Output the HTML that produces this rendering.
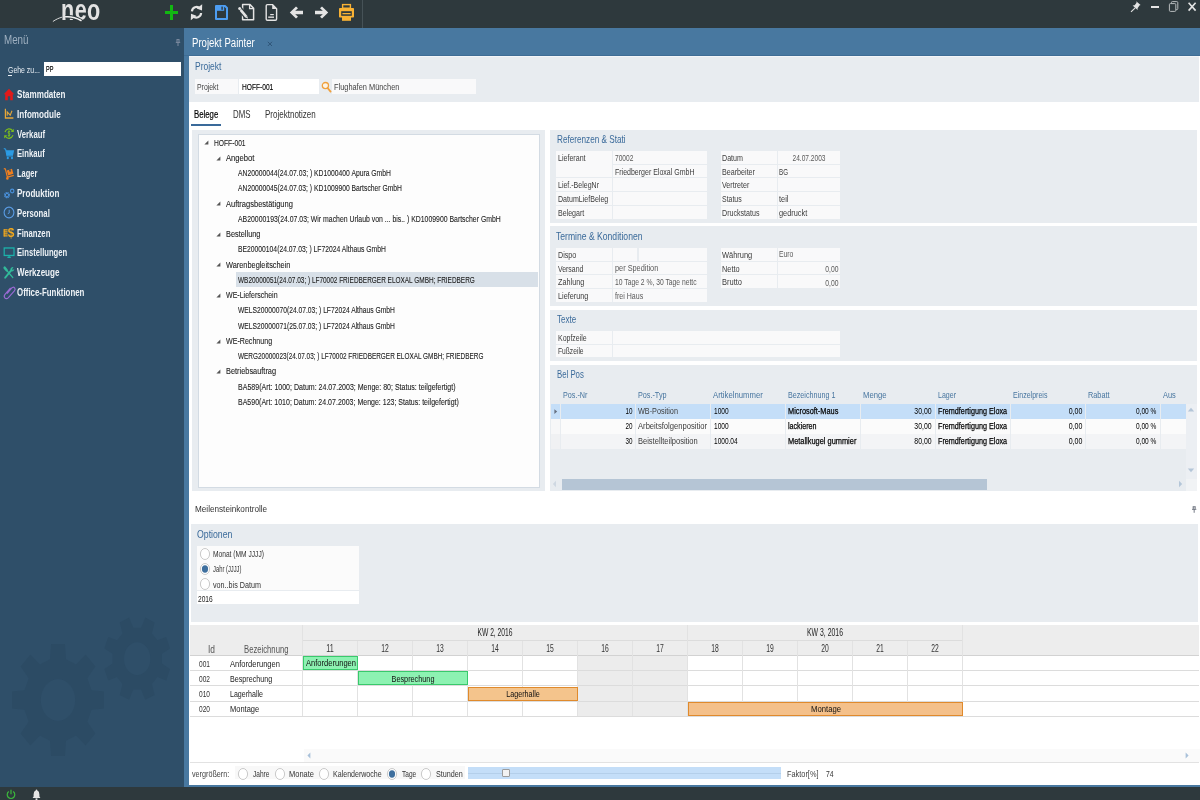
<!DOCTYPE html>
<html lang="de"><head><meta charset="utf-8"><title>neo - Projekt Painter</title>
<style>
html,body{margin:0;padding:0;}
body{width:1200px;height:800px;overflow:hidden;position:relative;background:#fff;font-family:"Liberation Sans",sans-serif;}
.r{position:absolute;}
.t{position:absolute;white-space:nowrap;line-height:1;transform-origin:0 0;}
svg{position:absolute;overflow:visible;}
#wrap{position:absolute;left:0;top:0;width:1200px;height:800px;will-change:transform;}
</style></head><body><div id="wrap">
<div class="r" style="left:0px;top:0px;width:1200px;height:28px;background:#2e393d;"></div>
<div class="r" style="left:0px;top:28px;width:184px;height:759px;background:#2f4f69;"></div>
<div class="r" style="left:184px;top:28px;width:1016px;height:28px;background:#4878a0;"></div>
<div class="r" style="left:184px;top:56px;width:5px;height:731px;background:#4878a0;"></div>
<div class="r" style="left:184px;top:785px;width:1016px;height:2px;background:#4878a0;"></div>
<div class="r" style="left:0px;top:787px;width:1200px;height:13px;background:#2e393d;"></div>
<div class="r" style="left:362px;top:0px;width:1px;height:28px;background:#465257;"></div>
<div class="r" style="left:189px;top:56px;width:1010px;height:46px;background:#e8ecf0;"></div>
<div class="r" style="left:195px;top:79px;width:43px;height:15px;background:#f9f9fa;"></div>
<div class="r" style="left:239px;top:79px;width:80px;height:15px;background:#fff;"></div>
<div class="r" style="left:332px;top:79px;width:144px;height:15px;background:#f9f9fa;"></div>
<div class="r" style="left:191px;top:124px;width:30px;height:2px;background:#3a6a9a;"></div>
<div class="r" style="left:192px;top:130px;width:353px;height:361px;background:#e8ecf0;"></div>
<div class="r" style="left:198px;top:134px;width:342px;height:354px;background:#fdfdfd;box-sizing:border-box;border:1px solid #d3dbe3;"></div>
<div class="r" style="left:235.6px;top:272.3px;width:302.4px;height:14.4px;background:#d8e0e8;"></div>
<div class="r" style="left:550px;top:130px;width:647px;height:92.6px;background:#e8ecf0;"></div>
<div class="r" style="left:550px;top:226.3px;width:647px;height:79.7px;background:#e8ecf0;"></div>
<div class="r" style="left:550px;top:309.6px;width:647px;height:51.5px;background:#e8ecf0;"></div>
<div class="r" style="left:550px;top:365px;width:647px;height:126px;background:#e8ecf0;"></div>
<div class="r" style="left:191px;top:524.2px;width:1007px;height:98px;background:#e8ecf0;"></div>
<span class="t" style="left:60.6px;top:-4.6px;font-size:30px;font-weight:bold;color:#e2e2e2;letter-spacing:0.6px;transform:scaleX(0.72)">neo</span>
<svg style="left:0;top:0" width="120" height="28"><path d="M65.6 16.9 C70 16.4 76 17.6 81.5 20.9" fill="none" stroke="#2e393d" stroke-width="3.4"/><path d="M53.2 21.3 C56 19.3 59 18 61.6 17.3" fill="none" stroke="#e8e8e8" stroke-width="0.9" stroke-linecap="round"/><path d="M65.6 16.8 C70 16.4 76 17.6 81 20.5" fill="none" stroke="#f2f2f2" stroke-width="1.5" stroke-linecap="round"/></svg>
<div class="r" style="left:164.8px;top:10.9px;width:13.3px;height:2.8px;background:#12b812;"></div>
<div class="r" style="left:170.1px;top:4.9px;width:2.8px;height:15.1px;background:#12b812;"></div>
<svg style="left:188px;top:2px" width="17" height="21" viewBox="0 0 17 21"><g fill="none" stroke="#e4e4e4" stroke-width="2.2"><path d="M3.9 9.4 A4.7 4.7 0 0 1 12 6.4"/><path d="M13.1 11 A4.7 4.7 0 0 1 5 14"/></g><path d="M14.2 2.2 L14 8.6 L8.6 6.6 Z" fill="#e4e4e4"/><path d="M2.8 18.2 L3 11.8 L8.4 13.8 Z" fill="#e4e4e4"/></svg>
<svg style="left:215px;top:5px" width="13" height="15" viewBox="0 0 13 15"><path d="M1 1 H10 L12 3 V14 H1 Z" fill="#2e393d" stroke="#4d9df2" stroke-width="2" stroke-linejoin="round"/><rect x="2" y="0.4" width="7.2" height="5.4" fill="#4d9df2"/><rect x="6.4" y="1.6" width="1.4" height="3.2" fill="#2e393d"/></svg>
<svg style="left:238px;top:3px" width="18" height="19" viewBox="0 0 18 19"><path d="M4.6 1.6 H12 L15.6 5.2 V16.8 H4.6 Z" fill="none" stroke="#e4e4e4" stroke-width="1.5" stroke-linejoin="round"/><path d="M11.6 1.6 V5.6 H15.6" fill="none" stroke="#e4e4e4" stroke-width="1.3"/><path d="M1.4 5.2 L9 14.6" stroke="#2e393d" stroke-width="5"/><path d="M2.6 6.8 L8.4 13.8" stroke="#e4e4e4" stroke-width="2.6"/><circle cx="1.7" cy="5.4" r="1.5" fill="#e4e4e4"/><path d="M7.6 14.6 L10 15.8 L9.4 13.2 Z" fill="#e4e4e4"/></svg>
<svg style="left:264px;top:3px" width="15" height="19" viewBox="0 0 15 19"><path d="M3.4 1.6 H8.6 L12.6 5.8 V16 Q12.6 17.2 11.4 17.2 H3.4 Q2.2 17.2 2.2 16 V2.8 Q2.2 1.6 3.4 1.6 Z" fill="none" stroke="#e4e4e4" stroke-width="1.4"/><path d="M8.2 1.6 V6 H12.6 Z" fill="#e4e4e4"/><rect x="6.2" y="11" width="3.6" height="1.2" fill="#e4e4e4"/><rect x="4.2" y="13.4" width="5.8" height="1.6" fill="#c8c8c8"/></svg>
<svg style="left:289px;top:5px" width="15" height="15" viewBox="0 0 15 15"><path d="M0.8 7.4 L7 1.4 L9 3.2 L6.2 5.8 H14 V9.2 H6.2 L9 11.8 L7 13.4 Z" fill="#e4e4e4"/></svg>
<svg style="left:314px;top:5px" width="15" height="15" viewBox="0 0 15 15"><path d="M14.2 7.4 L8 1.4 L6 3.2 L8.8 5.8 H1 V9.2 H8.8 L6 11.8 L8 13.4 Z" fill="#e4e4e4"/></svg>
<svg style="left:338px;top:3px" width="17" height="19" viewBox="0 0 17 19"><rect x="1" y="5" width="15" height="9.6" rx="0.8" fill="#f9b234"/><rect x="4.6" y="1.6" width="7.8" height="3.6" fill="none" stroke="#f9b234" stroke-width="1.4"/><rect x="4" y="14" width="9" height="3.8" fill="#f9b234"/><rect x="3.2" y="8.2" width="10.6" height="4.6" fill="#2e393d"/><rect x="4.4" y="10" width="8.2" height="1.3" fill="#f9b234"/></svg>
<svg style="left:1130px;top:0px" width="12" height="13" viewBox="0 0 12 13"><path d="M6.2 1.2 L10.6 5 L9.4 5.6 L7.6 8.2 L7.6 10 L2.6 5.6 L4.6 5.2 L6.6 2.8 Z" fill="#e4e4e4"/><path d="M5.2 7.8 L1 11.8" stroke="#e4e4e4" stroke-width="1.1"/></svg>
<div class="r" style="left:1150.8px;top:5.9px;width:8.4px;height:2.2px;background:#e4e4e4;"></div>
<svg style="left:1168px;top:0px" width="12" height="13" viewBox="0 0 12 13"><rect x="1.4" y="3.6" width="6.4" height="7.8" rx="1" fill="none" stroke="#b8bcbe" stroke-width="1"/><path d="M3.4 3.4 V2.6 Q3.4 1.6 4.4 1.6 H8.8 Q9.8 1.6 9.8 2.6 V8.6 Q9.8 9.6 8.8 9.6 H8" fill="none" stroke="#b8bcbe" stroke-width="1"/></svg>
<svg style="left:1187px;top:1px" width="10" height="11" viewBox="0 0 10 11"><path d="M1.6 1.8 L8.6 9.6 M8.6 1.8 L1.6 9.6" stroke="#e4e4e4" stroke-width="1.6"/></svg>
<span class="t" style="top:33.57px;font-size:12.79px;color:#9fb0c0;left:3.8px;transform:scaleX(0.766);">Menü</span>
<svg style="left:175px;top:38.6px" width="6" height="8" viewBox="0 0 6 8"><path d="M1.6 0.6 H4.4 M2 0.6 V3 M4 0.6 V3 M0.8 3.4 H5.2 M3 3.4 V7" stroke="#8792a6" stroke-width="0.9" fill="none"/></svg>
<span class="t" style="top:65.28px;font-size:9.59px;color:#e8eef4;left:8px;transform:scaleX(0.723);">Gehe zu...</span>
<div class="r" style="left:8px;top:75.2px;width:3.6px;height:0.9px;background:#e8eef4;"></div>
<div class="r" style="left:44px;top:62px;width:137px;height:14px;background:#fff;"></div>
<span class="t" style="top:65.32px;font-size:9.3px;color:#000;left:46px;transform:scaleX(0.596);-webkit-text-stroke:0.2px #000;">PP</span>
<span class="t" style="top:89.09px;font-size:10.76px;color:#eef2f6;font-weight:bold;left:16.9px;transform:scaleX(0.75);">Stammdaten</span>
<span class="t" style="top:108.89px;font-size:10.76px;color:#eef2f6;font-weight:bold;left:16.9px;transform:scaleX(0.754);">Infomodule</span>
<span class="t" style="top:128.69px;font-size:10.76px;color:#eef2f6;font-weight:bold;left:16.9px;transform:scaleX(0.723);">Verkauf</span>
<span class="t" style="top:148.49px;font-size:10.76px;color:#eef2f6;font-weight:bold;left:16.9px;transform:scaleX(0.713);">Einkauf</span>
<span class="t" style="top:168.29px;font-size:10.76px;color:#eef2f6;font-weight:bold;left:16.9px;transform:scaleX(0.696);">Lager</span>
<span class="t" style="top:188.09px;font-size:10.76px;color:#eef2f6;font-weight:bold;left:16.9px;transform:scaleX(0.748);">Produktion</span>
<span class="t" style="top:207.89px;font-size:10.76px;color:#eef2f6;font-weight:bold;left:16.9px;transform:scaleX(0.722);">Personal</span>
<span class="t" style="top:227.69px;font-size:10.76px;color:#eef2f6;font-weight:bold;left:16.9px;transform:scaleX(0.716);">Finanzen</span>
<span class="t" style="top:247.49px;font-size:10.76px;color:#eef2f6;font-weight:bold;left:16.9px;transform:scaleX(0.713);">Einstellungen</span>
<span class="t" style="top:267.29px;font-size:10.76px;color:#eef2f6;font-weight:bold;left:16.9px;transform:scaleX(0.751);">Werkzeuge</span>
<span class="t" style="top:287.09px;font-size:10.76px;color:#eef2f6;font-weight:bold;left:16.9px;transform:scaleX(0.733);">Office-Funktionen</span>
<svg style="left:3px;top:87.60000000000001px" width="12" height="13.2" viewBox="0 0 12 12" preserveAspectRatio="none"><path d="M6 0.6 L11.2 5.6 H9.8 V11.2 H7.2 V7.6 H4.8 V11.2 H2.2 V5.6 H0.8 Z" fill="#e01a1a"/></svg>
<svg style="left:3px;top:107.4px" width="12" height="13.2" viewBox="0 0 12 12" preserveAspectRatio="none"><path d="M2.4 1.6 V10 H10.4" fill="none" stroke="#e8a838" stroke-width="1.2"/><path d="M4.2 8 V4.4 L7.2 7.4 L9 3.4" fill="none" stroke="#e8a838" stroke-width="1.1"/></svg>
<svg style="left:3px;top:127.20000000000002px" width="12" height="13.2" viewBox="0 0 12 12" preserveAspectRatio="none"><g fill="none" stroke="#7cbc1c" stroke-width="1.2"><path d="M2 4.6 A4.4 4.4 0 0 1 9.6 3.4"/><path d="M10 7.4 A4.4 4.4 0 0 1 2.4 8.6"/></g><path d="M10.8 1.6 V4.6 H7.8 Z M1.2 10.4 V7.4 H4.2 Z" fill="#7cbc1c"/><path d="M7.2 4.4 Q6 3.6 5.2 4.4 Q4.6 5.4 6 6 Q7.6 6.6 6.8 7.6 Q6 8.4 4.8 7.6 M6 3 V9" fill="none" stroke="#7cbc1c" stroke-width="0.9"/></svg>
<svg style="left:3px;top:147.00000000000003px" width="12" height="13.2" viewBox="0 0 12 12" preserveAspectRatio="none"><path d="M0.8 1.4 L2.6 2 L4 8 H10" fill="none" stroke="#2b9be4" stroke-width="1.1"/><path d="M2.8 3 H11.2 L10 7.4 H3.8 Z" fill="#2b9be4"/><circle cx="4.8" cy="10" r="1.1" fill="#2b9be4"/><circle cx="9" cy="10" r="1.1" fill="#2b9be4"/></svg>
<svg style="left:3px;top:166.8px" width="12" height="13.2" viewBox="0 0 12 12" preserveAspectRatio="none"><path d="M0.8 1.4 L2.4 1.8 L4.4 9.2 L10.8 7.6" fill="none" stroke="#f07f1e" stroke-width="1.2"/><path d="M3.8 3.2 L9 1.6 L10.4 6.2 L5.2 7.8 Z" fill="#f07f1e"/><path d="M6 2.4 L6.6 4.4 L8 4 L7.4 2 Z" fill="#2f4f69"/><circle cx="4.4" cy="10.4" r="1.25" fill="#f07f1e"/></svg>
<svg style="left:3px;top:186.6px" width="12" height="13.2" viewBox="0 0 12 12" preserveAspectRatio="none"><circle cx="4" cy="7.4" r="2.2" fill="none" stroke="#4a92dc" stroke-width="1.5" stroke-dasharray="1.2 0.55"/><circle cx="4" cy="7.4" r="1.6" fill="none" stroke="#4a92dc" stroke-width="0.9"/><circle cx="9.2" cy="3.6" r="1.7" fill="none" stroke="#4a92dc" stroke-width="1.1"/></svg>
<svg style="left:3px;top:206.4px" width="12" height="13.2" viewBox="0 0 12 12" preserveAspectRatio="none"><circle cx="6" cy="6" r="4.9" fill="none" stroke="#5a9ce4" stroke-width="1.1"/><path d="M6.2 3.4 V6.4 L4.8 7" fill="none" stroke="#5a9ce4" stroke-width="0.9"/></svg>
<svg style="left:3px;top:226.20000000000002px" width="12" height="13.2" viewBox="0 0 12 12" preserveAspectRatio="none"><path d="M0.8 3.6 H4.6 M0.8 5.4 H4.6 M0.8 7.2 H4.6 M0.8 9 H4.6" stroke="#f2a81c" stroke-width="1.15"/><rect x="0.6" y="3" width="1.1" height="6.6" fill="#f2a81c"/><text x="4.7" y="10.2" font-family="Liberation Sans, sans-serif" font-weight="bold" font-size="11.5" fill="#f2a81c" textLength="6.6" lengthAdjust="spacingAndGlyphs">$</text></svg>
<svg style="left:3px;top:246.00000000000003px" width="12" height="13.2" viewBox="0 0 12 12" preserveAspectRatio="none"><rect x="1.2" y="1.8" width="9.8" height="6.8" fill="none" stroke="#1cb2aa" stroke-width="1.2"/><path d="M4.4 10.4 H7.8 M6.1 8.6 V10.4" stroke="#1cb2aa" stroke-width="1.2"/></svg>
<svg style="left:3px;top:265.8px" width="12" height="13.2" viewBox="0 0 12 12" preserveAspectRatio="none"><path d="M2.2 10.6 L8.2 4" stroke="#32ba9a" stroke-width="1.9" stroke-linecap="round"/><path d="M7.4 3.2 A2.3 2.3 0 0 1 10.6 1.2 L9.2 2.8 L9.8 3.8 L11.2 2.4 A2.3 2.3 0 0 1 8.6 5 Z" fill="#32ba9a"/><path d="M1.6 1.6 L3.6 3.8" stroke="#32ba9a" stroke-width="2.4" stroke-linecap="round"/><path d="M3.6 3.8 L9.8 10.4" stroke="#32ba9a" stroke-width="1.2" stroke-linecap="round"/></svg>
<svg style="left:2.6px;top:284.6px" width="13" height="15" viewBox="0 0 13 15"><path d="M4 8.6 L8.6 3.2 Q10.2 1.4 11.6 2.8 Q12.8 4.2 11.4 5.8 L5.4 12.6 Q3.4 14.6 1.8 12.8 Q0.4 11.2 2.2 9.2 L7.6 3" fill="none" stroke="#9a6ad4" stroke-width="1.15"/></svg>
<svg style="left:0;top:600px" width="184" height="186" viewBox="0 600 184 186"><polygon points="51.1,644.1 64.9,644.1 66.0,659.3 76.0,664.4 85.6,654.6 95.4,666.4 87.3,678.2 91.5,690.2 104.0,691.6 104.0,708.4 91.5,709.8 87.3,721.8 95.4,733.6 85.6,745.4 76.0,735.6 66.0,740.7 64.9,755.9 51.1,755.9 50.0,740.7 40.0,735.6 30.4,745.4 20.6,733.6 28.7,721.8 24.5,709.8 12.0,708.4 12.0,691.6 24.5,690.2 28.7,678.2 20.6,666.4 30.4,654.6 40.0,664.4 50.0,659.3" fill="#2c4b64"/><ellipse cx="58" cy="700" rx="17.2" ry="20.9" fill="#2f4f69"/><polygon points="170.0,668.9 166.2,680.5 157.4,677.1 151.9,684.0 154.6,694.9 145.3,699.8 141.1,689.6 133.3,689.6 129.1,699.8 119.8,694.9 122.5,684.0 117.0,677.1 108.2,680.5 104.4,668.9 112.5,663.6 112.5,653.8 104.4,648.5 108.2,636.9 117.0,640.3 122.5,633.4 119.8,622.5 129.1,617.6 133.3,627.8 141.1,627.8 145.3,617.6 154.6,622.5 151.9,633.4 157.4,640.3 166.2,636.9 170.0,648.5 161.9,653.8 161.9,663.6" fill="#2c4b64"/><ellipse cx="137.2" cy="658.7" rx="13.2" ry="16.5" fill="#2f4f69"/></svg>
<div class="r" style="left:184px;top:55px;width:1016px;height:1px;background:#3f6d95;"></div>
<div class="r" style="left:189px;top:56px;width:1010px;height:1px;background:#f3f5f8;"></div>
<span class="t" style="top:35.85px;font-size:13.52px;color:#fff;left:192px;transform:scaleX(0.708);">Projekt Painter</span>
<svg style="left:267px;top:41px" width="6" height="6" viewBox="0 0 6 6"><path d="M0.8 0.8 L5 5 M5 0.8 L0.8 5" stroke="#2f5578" stroke-width="1"/></svg>
<span class="t" style="top:60.35px;font-size:11.63px;color:#3a6a9a;left:195.3px;transform:scaleX(0.729);">Projekt</span>
<span class="t" style="top:81.9px;font-size:9.45px;color:#444;left:196.5px;transform:scaleX(0.731);">Projekt</span>
<span class="t" style="top:81.9px;font-size:9.45px;color:#000;left:241.5px;transform:scaleX(0.701);-webkit-text-stroke:0.15px #000;">HOFF-001</span>
<span class="t" style="top:81.9px;font-size:9.45px;color:#444;left:333.6px;transform:scaleX(0.784);">Flughafen München</span>
<svg style="left:321px;top:81px" width="11" height="12" viewBox="0 0 11 12"><circle cx="4.4" cy="4.6" r="3.1" fill="#fdf3e4" stroke="#f0a03c" stroke-width="1.3"/><path d="M6.8 7.2 L9.6 10.6" stroke="#f0a03c" stroke-width="1.8" stroke-linecap="round"/></svg>
<span class="t" style="top:108.8px;font-size:11.34px;color:#000;left:193.5px;transform:scaleX(0.688);-webkit-text-stroke:0.2px #000;">Belege</span>
<span class="t" style="top:108.8px;font-size:11.34px;color:#333;left:232.8px;transform:scaleX(0.694);">DMS</span>
<span class="t" style="top:108.8px;font-size:11.34px;color:#333;left:264.5px;transform:scaleX(0.707);">Projektnotizen</span>
<span class="t" style="top:137.65px;font-size:9.74px;color:#1c1c1c;left:213.7px;transform:scaleX(0.687);-webkit-text-stroke:0.1px #1c1c1c;">HOFF-001</span>
<svg style="left:204.1px;top:140.3px" width="5" height="5" viewBox="0 0 5 5"><path d="M4.4 0.4 V4.4 H0.4 Z" fill="#555"/></svg>
<span class="t" style="top:152.9px;font-size:9.74px;color:#1c1c1c;left:225.7px;transform:scaleX(0.785);-webkit-text-stroke:0.1px #1c1c1c;">Angebot</span>
<svg style="left:216.1px;top:155.55px" width="5" height="5" viewBox="0 0 5 5"><path d="M4.4 0.4 V4.4 H0.4 Z" fill="#555"/></svg>
<span class="t" style="top:168.15px;font-size:9.74px;color:#1c1c1c;left:237.5px;transform:scaleX(0.696);-webkit-text-stroke:0.1px #1c1c1c;">AN20000044(24.07.03; ) KD1000400 Apura GmbH</span>
<span class="t" style="top:183.4px;font-size:9.74px;color:#1c1c1c;left:237.5px;transform:scaleX(0.695);-webkit-text-stroke:0.1px #1c1c1c;">AN20000045(24.07.03; ) KD1009900 Bartscher GmbH</span>
<span class="t" style="top:198.65px;font-size:9.74px;color:#1c1c1c;left:225.7px;transform:scaleX(0.772);-webkit-text-stroke:0.1px #1c1c1c;">Auftragsbestätigung</span>
<svg style="left:216.1px;top:201.3px" width="5" height="5" viewBox="0 0 5 5"><path d="M4.4 0.4 V4.4 H0.4 Z" fill="#555"/></svg>
<span class="t" style="top:213.9px;font-size:9.74px;color:#1c1c1c;left:237.5px;transform:scaleX(0.708);-webkit-text-stroke:0.1px #1c1c1c;">AB20000193(24.07.03; Wir machen Urlaub von ... bis.. ) KD1009900 Bartscher GmbH</span>
<span class="t" style="top:229.15px;font-size:9.74px;color:#1c1c1c;left:225.7px;transform:scaleX(0.758);-webkit-text-stroke:0.1px #1c1c1c;">Bestellung</span>
<svg style="left:216.1px;top:231.8px" width="5" height="5" viewBox="0 0 5 5"><path d="M4.4 0.4 V4.4 H0.4 Z" fill="#555"/></svg>
<span class="t" style="top:244.4px;font-size:9.74px;color:#1c1c1c;left:237.5px;transform:scaleX(0.695);-webkit-text-stroke:0.1px #1c1c1c;">BE20000104(24.07.03; ) LF72024 Althaus GmbH</span>
<span class="t" style="top:259.65px;font-size:9.74px;color:#1c1c1c;left:225.7px;transform:scaleX(0.757);-webkit-text-stroke:0.1px #1c1c1c;">Warenbegleitschein</span>
<svg style="left:216.1px;top:262.3px" width="5" height="5" viewBox="0 0 5 5"><path d="M4.4 0.4 V4.4 H0.4 Z" fill="#555"/></svg>
<span class="t" style="top:274.9px;font-size:9.74px;color:#1c1c1c;left:237.5px;transform:scaleX(0.663);-webkit-text-stroke:0.1px #1c1c1c;">WB20000051(24.07.03; ) LF70002 FRIEDBERGER ELOXAL GMBH; FRIEDBERG</span>
<span class="t" style="top:290.15px;font-size:9.74px;color:#1c1c1c;left:225.7px;transform:scaleX(0.722);-webkit-text-stroke:0.1px #1c1c1c;">WE-Lieferschein</span>
<svg style="left:216.1px;top:292.8px" width="5" height="5" viewBox="0 0 5 5"><path d="M4.4 0.4 V4.4 H0.4 Z" fill="#555"/></svg>
<span class="t" style="top:305.4px;font-size:9.74px;color:#1c1c1c;left:237.5px;transform:scaleX(0.69);-webkit-text-stroke:0.1px #1c1c1c;">WELS20000070(24.07.03; ) LF72024 Althaus GmbH</span>
<span class="t" style="top:320.65px;font-size:9.74px;color:#1c1c1c;left:237.5px;transform:scaleX(0.69);-webkit-text-stroke:0.1px #1c1c1c;">WELS20000071(25.07.03; ) LF72024 Althaus GmbH</span>
<span class="t" style="top:335.9px;font-size:9.74px;color:#1c1c1c;left:225.7px;transform:scaleX(0.729);-webkit-text-stroke:0.1px #1c1c1c;">WE-Rechnung</span>
<svg style="left:216.1px;top:338.55px" width="5" height="5" viewBox="0 0 5 5"><path d="M4.4 0.4 V4.4 H0.4 Z" fill="#555"/></svg>
<span class="t" style="top:351.15px;font-size:9.74px;color:#1c1c1c;left:237.5px;transform:scaleX(0.66);-webkit-text-stroke:0.1px #1c1c1c;">WERG20000023(24.07.03; ) LF70002 FRIEDBERGER ELOXAL GMBH; FRIEDBERG</span>
<span class="t" style="top:366.4px;font-size:9.74px;color:#1c1c1c;left:225.7px;transform:scaleX(0.758);-webkit-text-stroke:0.1px #1c1c1c;">Betriebsauftrag</span>
<svg style="left:216.1px;top:369.05px" width="5" height="5" viewBox="0 0 5 5"><path d="M4.4 0.4 V4.4 H0.4 Z" fill="#555"/></svg>
<span class="t" style="top:381.65px;font-size:9.74px;color:#1c1c1c;left:237.5px;transform:scaleX(0.723);-webkit-text-stroke:0.1px #1c1c1c;">BA589(Art: 1000; Datum: 24.07.2003; Menge: 80; Status: teilgefertigt)</span>
<span class="t" style="top:396.9px;font-size:9.74px;color:#1c1c1c;left:237.5px;transform:scaleX(0.721);-webkit-text-stroke:0.1px #1c1c1c;">BA590(Art: 1010; Datum: 24.07.2003; Menge: 123; Status: teilgefertigt)</span>
<span class="t" style="top:133.69px;font-size:10.76px;color:#3a6a9a;left:556.7px;transform:scaleX(0.76);">Referenzen &amp; Stati</span>
<div class="r" style="left:556px;top:151px;width:56px;height:26px;background:#f9f9fa;"></div>
<div class="r" style="left:613px;top:151px;width:94px;height:13px;background:#f9f9fa;"></div>
<div class="r" style="left:613px;top:165px;width:94px;height:12px;background:#f9f9fa;"></div>
<div class="r" style="left:613px;top:178px;width:94px;height:13px;background:#f9f9fa;"></div>
<div class="r" style="left:556px;top:178px;width:56px;height:13px;background:#f9f9fa;"></div>
<div class="r" style="left:613px;top:192px;width:94px;height:13px;background:#f9f9fa;"></div>
<div class="r" style="left:556px;top:192px;width:56px;height:13px;background:#f9f9fa;"></div>
<div class="r" style="left:613px;top:206px;width:94px;height:13px;background:#f9f9fa;"></div>
<div class="r" style="left:556px;top:206px;width:56px;height:13px;background:#f9f9fa;"></div>
<span class="t" style="top:153.67px;font-size:9.01px;color:#3c3c3c;left:557.7px;transform:scaleX(0.787);">Lieferant</span>
<span class="t" style="top:181.27px;font-size:9.01px;color:#3c3c3c;left:557.7px;transform:scaleX(0.78);">Lief.-BelegNr</span>
<span class="t" style="top:195.07px;font-size:9.01px;color:#3c3c3c;left:557.7px;transform:scaleX(0.785);">DatumLiefBeleg</span>
<span class="t" style="top:208.87px;font-size:9.01px;color:#3c3c3c;left:557.7px;transform:scaleX(0.784);">Belegart</span>
<span class="t" style="top:154.29px;font-size:8.87px;color:#5a5a5a;left:614.7px;transform:scaleX(0.746);">70002</span>
<span class="t" style="top:167.87px;font-size:9.01px;color:#3c3c3c;left:614.7px;transform:scaleX(0.779);">Friedberger Eloxal GmbH</span>
<div class="r" style="left:721px;top:151px;width:56px;height:13px;background:#f9f9fa;"></div>
<div class="r" style="left:778px;top:151px;width:62px;height:13px;background:#f9f9fa;"></div>
<span class="t" style="top:154.07px;font-size:9.01px;color:#3c3c3c;left:722px;transform:scaleX(0.791);">Datum</span>
<div class="r" style="left:721px;top:165px;width:56px;height:12px;background:#f9f9fa;"></div>
<div class="r" style="left:778px;top:165px;width:62px;height:12px;background:#f9f9fa;"></div>
<span class="t" style="top:167.74px;font-size:9.01px;color:#3c3c3c;left:722px;transform:scaleX(0.794);">Bearbeiter</span>
<div class="r" style="left:721px;top:178px;width:56px;height:13px;background:#f9f9fa;"></div>
<div class="r" style="left:778px;top:178px;width:62px;height:13px;background:#f9f9fa;"></div>
<span class="t" style="top:181.41px;font-size:9.01px;color:#3c3c3c;left:722px;transform:scaleX(0.79);">Vertreter</span>
<div class="r" style="left:721px;top:192px;width:56px;height:13px;background:#f9f9fa;"></div>
<div class="r" style="left:778px;top:192px;width:62px;height:13px;background:#f9f9fa;"></div>
<span class="t" style="top:195.08px;font-size:9.01px;color:#3c3c3c;left:722px;transform:scaleX(0.771);">Status</span>
<div class="r" style="left:721px;top:206px;width:56px;height:13px;background:#f9f9fa;"></div>
<div class="r" style="left:778px;top:206px;width:62px;height:13px;background:#f9f9fa;"></div>
<span class="t" style="top:208.75px;font-size:9.01px;color:#3c3c3c;left:722px;transform:scaleX(0.79);">Druckstatus</span>
<span class="t" style="top:154.29px;font-size:8.87px;color:#5a5a5a;left:808.5px;transform-origin:0 0;transform:scaleX(0.743) translateX(-50%);">24.07.2003</span>
<span class="t" style="top:167.77px;font-size:9.01px;color:#3c3c3c;left:779px;transform:scaleX(0.691);">BG</span>
<span class="t" style="top:195.23px;font-size:9.3px;color:#3c3c3c;left:779px;transform:scaleX(0.791);">teil</span>
<span class="t" style="top:208.9px;font-size:9.3px;color:#3c3c3c;left:779px;transform:scaleX(0.793);">gedruckt</span>
<span class="t" style="top:231.54px;font-size:10.47px;color:#3a6a9a;left:556.4px;transform:scaleX(0.821);">Termine &amp; Konditionen</span>
<div class="r" style="left:556px;top:248px;width:56px;height:13px;background:#f9f9fa;"></div>
<div class="r" style="left:613px;top:248px;width:24px;height:13px;background:#f9f9fa;"></div>
<div class="r" style="left:639px;top:248px;width:68px;height:13px;background:#f9f9fa;"></div>
<span class="t" style="top:250.87px;font-size:9.01px;color:#3c3c3c;left:557.7px;transform:scaleX(0.794);">Dispo</span>
<div class="r" style="left:556px;top:262px;width:56px;height:12px;background:#f9f9fa;"></div>
<div class="r" style="left:613px;top:262px;width:94px;height:12px;background:#f9f9fa;"></div>
<span class="t" style="top:264.67px;font-size:9.01px;color:#3c3c3c;left:557.7px;transform:scaleX(0.768);">Versand</span>
<div class="r" style="left:556px;top:275px;width:56px;height:13px;background:#f9f9fa;"></div>
<div class="r" style="left:613px;top:275px;width:94px;height:13px;background:#f9f9fa;"></div>
<span class="t" style="top:278.47px;font-size:9.01px;color:#3c3c3c;left:557.7px;transform:scaleX(0.808);">Zahlung</span>
<div class="r" style="left:556px;top:289px;width:56px;height:13px;background:#f9f9fa;"></div>
<div class="r" style="left:613px;top:289px;width:94px;height:13px;background:#f9f9fa;"></div>
<span class="t" style="top:292.27px;font-size:9.01px;color:#3c3c3c;left:557.7px;transform:scaleX(0.806);">Lieferung</span>
<span class="t" style="top:264.27px;font-size:9.01px;color:#5a5a5a;left:614.7px;transform:scaleX(0.815);">per Spedition</span>
<span class="t" style="top:277.94px;font-size:9.01px;color:#5a5a5a;left:614.7px;transform:scaleX(0.75);">10 Tage 2 %, 30 Tage nettc</span>
<span class="t" style="top:291.87px;font-size:9.01px;color:#5a5a5a;left:614.7px;transform:scaleX(0.782);">frei Haus</span>
<div class="r" style="left:721px;top:248px;width:56px;height:13px;background:#f9f9fa;"></div>
<div class="r" style="left:778px;top:248px;width:62px;height:13px;background:#f9f9fa;"></div>
<span class="t" style="top:250.97px;font-size:9.01px;color:#3c3c3c;left:722px;transform:scaleX(0.829);">Währung</span>
<div class="r" style="left:721px;top:262px;width:56px;height:12px;background:#f9f9fa;"></div>
<div class="r" style="left:778px;top:262px;width:62px;height:12px;background:#f9f9fa;"></div>
<span class="t" style="top:264.64px;font-size:9.01px;color:#3c3c3c;left:722px;transform:scaleX(0.817);">Netto</span>
<div class="r" style="left:721px;top:275px;width:56px;height:13px;background:#f9f9fa;"></div>
<div class="r" style="left:778px;top:275px;width:62px;height:13px;background:#f9f9fa;"></div>
<span class="t" style="top:278.31px;font-size:9.01px;color:#3c3c3c;left:722px;transform:scaleX(0.832);">Brutto</span>
<span class="t" style="top:250.39px;font-size:8.87px;color:#5a5a5a;left:779px;transform:scaleX(0.763);">Euro</span>
<span class="t" style="top:264.97px;font-size:9.01px;color:#5a5a5a;right:361px;transform-origin:100% 0;transform:scaleX(0.753);">0,00</span>
<span class="t" style="top:278.64px;font-size:9.01px;color:#5a5a5a;right:361px;transform-origin:100% 0;transform:scaleX(0.753);">0,00</span>
<span class="t" style="top:314.61px;font-size:10.03px;color:#3a6a9a;left:556.7px;transform:scaleX(0.805);">Texte</span>
<div class="r" style="left:556px;top:331px;width:56px;height:13px;background:#f9f9fa;"></div>
<div class="r" style="left:613px;top:331px;width:227px;height:13px;background:#f9f9fa;"></div>
<span class="t" style="top:333.99px;font-size:8.87px;color:#3c3c3c;left:557.7px;transform:scaleX(0.787);">Kopfzeile</span>
<div class="r" style="left:556px;top:345px;width:56px;height:12px;background:#f9f9fa;"></div>
<div class="r" style="left:613px;top:345px;width:227px;height:12px;background:#f9f9fa;"></div>
<span class="t" style="top:347.29px;font-size:8.87px;color:#3c3c3c;left:557.7px;transform:scaleX(0.753);">Fußzeile</span>
<span class="t" style="top:370.41px;font-size:10.03px;color:#3a6a9a;left:556.7px;transform:scaleX(0.778);">Bel Pos</span>
<span class="t" style="top:391.44px;font-size:9.16px;color:#47759f;left:563.2px;transform:scaleX(0.786);">Pos.-Nr</span>
<span class="t" style="top:391.44px;font-size:9.16px;color:#47759f;left:638.2px;transform:scaleX(0.789);">Pos.-Typ</span>
<span class="t" style="top:391.44px;font-size:9.16px;color:#47759f;left:713.2px;transform:scaleX(0.843);">Artikelnummer</span>
<span class="t" style="top:391.44px;font-size:9.16px;color:#47759f;left:788.2px;transform:scaleX(0.782);">Bezeichnung 1</span>
<span class="t" style="top:391.44px;font-size:9.16px;color:#47759f;left:863.2px;transform:scaleX(0.839);">Menge</span>
<span class="t" style="top:391.44px;font-size:9.16px;color:#47759f;left:938.2px;transform:scaleX(0.768);">Lager</span>
<span class="t" style="top:391.44px;font-size:9.16px;color:#47759f;left:1013.2px;transform:scaleX(0.768);">Einzelpreis</span>
<span class="t" style="top:391.44px;font-size:9.16px;color:#47759f;left:1088.2px;transform:scaleX(0.8);">Rabatt</span>
<span class="t" style="top:391.44px;font-size:9.16px;color:#47759f;left:1163.2px;transform:scaleX(0.811);">Aus</span>
<div class="r" style="left:550.5px;top:404px;width:9.5px;height:14.5px;background:#c4def8;"></div>
<div class="r" style="left:561px;top:404px;width:74px;height:14.5px;background:#c4def8;"></div>
<div class="r" style="left:636px;top:404px;width:74px;height:14.5px;background:#c4def8;"></div>
<div class="r" style="left:711px;top:404px;width:74px;height:14.5px;background:#c4def8;"></div>
<div class="r" style="left:786px;top:404px;width:74px;height:14.5px;background:#c4def8;"></div>
<div class="r" style="left:861px;top:404px;width:74px;height:14.5px;background:#c4def8;"></div>
<div class="r" style="left:936px;top:404px;width:74px;height:14.5px;background:#c4def8;"></div>
<div class="r" style="left:1011px;top:404px;width:74px;height:14.5px;background:#c4def8;"></div>
<div class="r" style="left:1086px;top:404px;width:74px;height:14.5px;background:#c4def8;"></div>
<div class="r" style="left:1161px;top:404px;width:25px;height:14.5px;background:#c4def8;"></div>
<div class="r" style="left:550.5px;top:419px;width:9.5px;height:14.5px;background:#f7f7f8;"></div>
<div class="r" style="left:561px;top:419px;width:74px;height:14.5px;background:#fbfbfb;"></div>
<div class="r" style="left:636px;top:419px;width:74px;height:14.5px;background:#fbfbfb;"></div>
<div class="r" style="left:711px;top:419px;width:74px;height:14.5px;background:#fbfbfb;"></div>
<div class="r" style="left:786px;top:419px;width:74px;height:14.5px;background:#fbfbfb;"></div>
<div class="r" style="left:861px;top:419px;width:74px;height:14.5px;background:#fbfbfb;"></div>
<div class="r" style="left:936px;top:419px;width:74px;height:14.5px;background:#fbfbfb;"></div>
<div class="r" style="left:1011px;top:419px;width:74px;height:14.5px;background:#fbfbfb;"></div>
<div class="r" style="left:1086px;top:419px;width:74px;height:14.5px;background:#fbfbfb;"></div>
<div class="r" style="left:1161px;top:419px;width:25px;height:14.5px;background:#fbfbfb;"></div>
<div class="r" style="left:550.5px;top:434px;width:9.5px;height:14.5px;background:#f0f1f3;"></div>
<div class="r" style="left:561px;top:434px;width:74px;height:14.5px;background:#f3f4f6;"></div>
<div class="r" style="left:636px;top:434px;width:74px;height:14.5px;background:#f3f4f6;"></div>
<div class="r" style="left:711px;top:434px;width:74px;height:14.5px;background:#f3f4f6;"></div>
<div class="r" style="left:786px;top:434px;width:74px;height:14.5px;background:#f3f4f6;"></div>
<div class="r" style="left:861px;top:434px;width:74px;height:14.5px;background:#f3f4f6;"></div>
<div class="r" style="left:936px;top:434px;width:74px;height:14.5px;background:#f3f4f6;"></div>
<div class="r" style="left:1011px;top:434px;width:74px;height:14.5px;background:#f3f4f6;"></div>
<div class="r" style="left:1086px;top:434px;width:74px;height:14.5px;background:#f3f4f6;"></div>
<div class="r" style="left:1161px;top:434px;width:25px;height:14.5px;background:#f3f4f6;"></div>
<svg style="left:554px;top:409px" width="4" height="6" viewBox="0 0 4 6"><path d="M0.4 0.3 L3.2 2.6 L0.4 4.9 Z" fill="#667080"/></svg>
<span class="t" style="top:406.1px;font-size:9.45px;color:#000;right:568px;transform-origin:100% 0;transform:scaleX(0.666);">10</span>
<span class="t" style="top:406.1px;font-size:9.45px;color:#3c3c3c;left:638.2px;transform:scaleX(0.769);">WB-Position</span>
<span class="t" style="top:406.1px;font-size:9.45px;color:#000;left:713.6px;transform:scaleX(0.694);">1000</span>
<span class="t" style="top:406.1px;font-size:9.45px;color:#000;left:788px;transform:scaleX(0.78);-webkit-text-stroke:0.25px #000;">Microsoft-Maus</span>
<span class="t" style="top:406.1px;font-size:9.45px;color:#000;right:268px;transform-origin:100% 0;transform:scaleX(0.732);">30,00</span>
<span class="t" style="top:406.1px;font-size:9.45px;color:#000;left:938.4px;transform:scaleX(0.765);-webkit-text-stroke:0.25px #000;">Fremdfertigung Eloxa</span>
<span class="t" style="top:406.1px;font-size:9.45px;color:#000;right:117.6px;transform-origin:100% 0;transform:scaleX(0.745);">0,00</span>
<span class="t" style="top:406.1px;font-size:9.45px;color:#000;right:43.2px;transform-origin:100% 0;transform:scaleX(0.693);">0,00 %</span>
<span class="t" style="top:421.1px;font-size:9.45px;color:#000;right:568px;transform-origin:100% 0;transform:scaleX(0.666);">20</span>
<span class="t" style="top:421.1px;font-size:9.45px;color:#3c3c3c;left:638.2px;transform:scaleX(0.808);">Arbeitsfolgenpositior</span>
<span class="t" style="top:421.1px;font-size:9.45px;color:#000;left:713.6px;transform:scaleX(0.694);">1000</span>
<span class="t" style="top:421.1px;font-size:9.45px;color:#000;left:788px;transform:scaleX(0.754);-webkit-text-stroke:0.25px #000;">lackieren</span>
<span class="t" style="top:421.1px;font-size:9.45px;color:#000;right:268px;transform-origin:100% 0;transform:scaleX(0.732);">30,00</span>
<span class="t" style="top:421.1px;font-size:9.45px;color:#000;left:938.4px;transform:scaleX(0.765);-webkit-text-stroke:0.25px #000;">Fremdfertigung Eloxa</span>
<span class="t" style="top:421.1px;font-size:9.45px;color:#000;right:117.6px;transform-origin:100% 0;transform:scaleX(0.745);">0,00</span>
<span class="t" style="top:421.1px;font-size:9.45px;color:#000;right:43.2px;transform-origin:100% 0;transform:scaleX(0.693);">0,00 %</span>
<span class="t" style="top:436.1px;font-size:9.45px;color:#000;right:568px;transform-origin:100% 0;transform:scaleX(0.666);">30</span>
<span class="t" style="top:436.1px;font-size:9.45px;color:#3c3c3c;left:638.2px;transform:scaleX(0.796);">Beistellteilposition</span>
<span class="t" style="top:436.1px;font-size:9.45px;color:#000;left:713.6px;transform:scaleX(0.691);">1000.04</span>
<span class="t" style="top:436.1px;font-size:9.45px;color:#000;left:788px;transform:scaleX(0.785);-webkit-text-stroke:0.25px #000;">Metallkugel gummier</span>
<span class="t" style="top:436.1px;font-size:9.45px;color:#000;right:268px;transform-origin:100% 0;transform:scaleX(0.732);">80,00</span>
<span class="t" style="top:436.1px;font-size:9.45px;color:#000;left:938.4px;transform:scaleX(0.765);-webkit-text-stroke:0.25px #000;">Fremdfertigung Eloxa</span>
<span class="t" style="top:436.1px;font-size:9.45px;color:#000;right:117.6px;transform-origin:100% 0;transform:scaleX(0.745);">0,00</span>
<span class="t" style="top:436.1px;font-size:9.45px;color:#000;right:43.2px;transform-origin:100% 0;transform:scaleX(0.693);">0,00 %</span>
<div class="r" style="left:1186px;top:404px;width:11px;height:87px;background:#eceff3;"></div>
<div class="r" style="left:1186px;top:478.5px;width:11px;height:12.5px;background:#f1f3f5;"></div>
<div class="r" style="left:562px;top:478.5px;width:425px;height:11.5px;background:#b5c5d5;"></div>
<svg style="left:552px;top:480px" width="5" height="8" viewBox="0 0 5 8"><path d="M4 0.8 L0.8 4 L4 7.2 Z" fill="#cfd8e2"/></svg>
<svg style="left:1178px;top:480px" width="5" height="8" viewBox="0 0 5 8"><path d="M1 0.8 L4.2 4 L1 7.2 Z" fill="#b4c6d8"/></svg>
<svg style="left:1187px;top:407px" width="8" height="5" viewBox="0 0 8 5"><path d="M0.8 4.4 L4 0.8 L7.2 4.4 Z" fill="#b4c6d8"/></svg>
<svg style="left:1187px;top:468px" width="8" height="5" viewBox="0 0 8 5"><path d="M0.8 0.6 L4 4.2 L7.2 0.6 Z" fill="#b4c6d8"/></svg>
<span class="t" style="top:504.18px;font-size:9.59px;color:#333;left:194.8px;transform:scaleX(0.852);">Meilensteinkontrolle</span>
<svg style="left:1190.6px;top:506.4px" width="6" height="7.4" viewBox="0 0 7 8"><path d="M2 0.6 H5.4 M2.6 0.6 V3.2 M4.8 0.6 V3.2 M1.2 3.6 H6.2 M3.7 3.6 V7.6" stroke="#4a5260" stroke-width="0.9" fill="none"/></svg>
<span class="t" style="top:529.51px;font-size:10.03px;color:#3a6a9a;left:196.8px;transform:scaleX(0.872);">Optionen</span>
<div class="r" style="left:196.8px;top:545.7px;width:162.2px;height:44.6px;background:#fbfbfb;"></div>
<div class="r" style="left:196.8px;top:591px;width:162.2px;height:13px;background:#fff;"></div>
<svg style="left:198.7px;top:546.5px" width="12" height="14" viewBox="0 0 12 14"><ellipse cx="6" cy="7" rx="4.6" ry="5.5" fill="#fff" stroke="#c4c4c4" stroke-width="0.9"/></svg>
<svg style="left:198.7px;top:561.8px" width="12" height="14" viewBox="0 0 12 14"><ellipse cx="6" cy="7" rx="4.6" ry="5.5" fill="#fff" stroke="#c4c4c4" stroke-width="0.9"/><ellipse cx="6" cy="7" rx="3.1" ry="3.7" fill="#3e6f9e"/></svg>
<svg style="left:198.7px;top:576.8px" width="12" height="14" viewBox="0 0 12 14"><ellipse cx="6" cy="7" rx="4.6" ry="5.5" fill="#fff" stroke="#c4c4c4" stroke-width="0.9"/></svg>
<span class="t" style="top:549.1px;font-size:9.45px;color:#333;left:213.3px;transform:scaleX(0.704);">Monat (MM JJJJ)</span>
<span class="t" style="top:564.4px;font-size:9.45px;color:#333;left:213.3px;transform:scaleX(0.617);">Jahr (JJJJ)</span>
<span class="t" style="top:579.8px;font-size:9.45px;color:#333;left:213.3px;transform:scaleX(0.762);">von..bis Datum</span>
<span class="t" style="top:594.81px;font-size:8.72px;color:#222;left:198.3px;transform:scaleX(0.758);">2016</span>
<div class="r" style="left:190px;top:624.5px;width:1009px;height:31px;background:#ededed;"></div>
<div class="r" style="left:577.5px;top:655px;width:110px;height:61.5px;background:#ececec;"></div>
<div class="r" style="left:302.5px;top:639.7px;width:660px;height:1px;background:#dcdcdc;"></div>
<div class="r" style="left:190px;top:654.8px;width:1009px;height:1px;background:#d2d2d2;"></div>
<div class="r" style="left:190px;top:670px;width:1009px;height:1px;background:#dcdcdc;"></div>
<div class="r" style="left:190px;top:685.2px;width:1009px;height:1px;background:#dcdcdc;"></div>
<div class="r" style="left:190px;top:700.75px;width:1009px;height:1px;background:#dcdcdc;"></div>
<div class="r" style="left:190px;top:715.9px;width:1009px;height:1px;background:#dcdcdc;"></div>
<div class="r" style="left:302px;top:624.5px;width:1px;height:91.5px;background:#e2e2e2;"></div>
<div class="r" style="left:357px;top:641px;width:1px;height:75px;background:#e2e2e2;"></div>
<div class="r" style="left:412px;top:641px;width:1px;height:75px;background:#e2e2e2;"></div>
<div class="r" style="left:467px;top:641px;width:1px;height:75px;background:#e2e2e2;"></div>
<div class="r" style="left:522px;top:641px;width:1px;height:75px;background:#e2e2e2;"></div>
<div class="r" style="left:577px;top:641px;width:1px;height:75px;background:#e2e2e2;"></div>
<div class="r" style="left:632px;top:641px;width:1px;height:75px;background:#e2e2e2;"></div>
<div class="r" style="left:687px;top:624.5px;width:1px;height:91.5px;background:#e2e2e2;"></div>
<div class="r" style="left:742px;top:641px;width:1px;height:75px;background:#e2e2e2;"></div>
<div class="r" style="left:797px;top:641px;width:1px;height:75px;background:#e2e2e2;"></div>
<div class="r" style="left:852px;top:641px;width:1px;height:75px;background:#e2e2e2;"></div>
<div class="r" style="left:907px;top:641px;width:1px;height:75px;background:#e2e2e2;"></div>
<div class="r" style="left:962px;top:624.5px;width:1px;height:91.5px;background:#e2e2e2;"></div>
<span class="t" style="top:627.88px;font-size:10.17px;color:#222;left:495.3px;transform-origin:0 0;transform:scaleX(0.661) translateX(-50%);">KW 2, 2016</span>
<span class="t" style="top:627.88px;font-size:10.17px;color:#222;left:825.3px;transform-origin:0 0;transform:scaleX(0.677) translateX(-50%);">KW 3, 2016</span>
<span class="t" style="top:643.98px;font-size:10.17px;color:#333;left:330.2px;transform-origin:0 0;transform:scaleX(0.71) translateX(-50%);">11</span>
<span class="t" style="top:643.98px;font-size:10.17px;color:#333;left:385.2px;transform-origin:0 0;transform:scaleX(0.663) translateX(-50%);">12</span>
<span class="t" style="top:643.98px;font-size:10.17px;color:#333;left:440.2px;transform-origin:0 0;transform:scaleX(0.663) translateX(-50%);">13</span>
<span class="t" style="top:643.98px;font-size:10.17px;color:#333;left:495.2px;transform-origin:0 0;transform:scaleX(0.663) translateX(-50%);">14</span>
<span class="t" style="top:643.98px;font-size:10.17px;color:#333;left:550.2px;transform-origin:0 0;transform:scaleX(0.663) translateX(-50%);">15</span>
<span class="t" style="top:643.98px;font-size:10.17px;color:#333;left:605.2px;transform-origin:0 0;transform:scaleX(0.663) translateX(-50%);">16</span>
<span class="t" style="top:643.98px;font-size:10.17px;color:#333;left:660.2px;transform-origin:0 0;transform:scaleX(0.663) translateX(-50%);">17</span>
<span class="t" style="top:643.98px;font-size:10.17px;color:#333;left:715.2px;transform-origin:0 0;transform:scaleX(0.663) translateX(-50%);">18</span>
<span class="t" style="top:643.98px;font-size:10.17px;color:#333;left:770.2px;transform-origin:0 0;transform:scaleX(0.663) translateX(-50%);">19</span>
<span class="t" style="top:643.98px;font-size:10.17px;color:#333;left:825.2px;transform-origin:0 0;transform:scaleX(0.663) translateX(-50%);">20</span>
<span class="t" style="top:643.98px;font-size:10.17px;color:#333;left:880.2px;transform-origin:0 0;transform:scaleX(0.663) translateX(-50%);">21</span>
<span class="t" style="top:643.98px;font-size:10.17px;color:#333;left:935.2px;transform-origin:0 0;transform:scaleX(0.663) translateX(-50%);">22</span>
<span class="t" style="top:644.54px;font-size:10.47px;color:#555;left:208.3px;transform:scaleX(0.802);">Id</span>
<span class="t" style="top:644.54px;font-size:10.47px;color:#555;left:243.5px;transform:scaleX(0.735);">Bezeichnung</span>
<span class="t" style="top:659.08px;font-size:9.59px;color:#333;left:198.8px;transform:scaleX(0.687);">001</span>
<span class="t" style="top:659.08px;font-size:9.59px;color:#222;left:230px;transform:scaleX(0.788);">Anforderungen</span>
<span class="t" style="top:674.28px;font-size:9.59px;color:#333;left:198.8px;transform:scaleX(0.687);">002</span>
<span class="t" style="top:674.28px;font-size:9.59px;color:#222;left:230px;transform:scaleX(0.748);">Besprechung</span>
<span class="t" style="top:688.98px;font-size:9.59px;color:#333;left:198.8px;transform:scaleX(0.687);">010</span>
<span class="t" style="top:688.98px;font-size:9.59px;color:#222;left:230px;transform:scaleX(0.737);">Lagerhalle</span>
<span class="t" style="top:704.18px;font-size:9.59px;color:#333;left:198.8px;transform:scaleX(0.687);">020</span>
<span class="t" style="top:704.18px;font-size:9.59px;color:#222;left:230px;transform:scaleX(0.782);">Montage</span>
<div class="r" style="left:303px;top:656px;width:55px;height:14.399999999999977px;background:#8df2b2;box-sizing:border-box;border:1px solid #39c96c;"></div>
<span class="t" style="top:658.45px;font-size:9.74px;color:#111;left:331px;transform-origin:0 0;transform:scaleX(0.776) translateX(-50%);">Anforderungen</span>
<div class="r" style="left:358px;top:671.4px;width:110px;height:14.100000000000023px;background:#8df2b2;box-sizing:border-box;border:1px solid #39c96c;"></div>
<span class="t" style="top:673.7px;font-size:9.74px;color:#111;left:413.2px;transform-origin:0 0;transform:scaleX(0.749) translateX(-50%);">Besprechung</span>
<div class="r" style="left:468px;top:686.5px;width:110px;height:14.299999999999955px;background:#f4c48c;box-sizing:border-box;border:1px solid #e08a2c;"></div>
<span class="t" style="top:688.9px;font-size:9.74px;color:#111;left:523.3px;transform-origin:0 0;transform:scaleX(0.739) translateX(-50%);">Lagerhalle</span>
<div class="r" style="left:688px;top:702px;width:275px;height:14.200000000000045px;background:#f4c08a;box-sizing:border-box;border:1px solid #e08a2c;"></div>
<span class="t" style="top:704.35px;font-size:9.74px;color:#111;left:825.5px;transform-origin:0 0;transform:scaleX(0.791) translateX(-50%);">Montage</span>
<div class="r" style="left:303.5px;top:749px;width:896px;height:13px;background:#fafafa;"></div>
<div class="r" style="left:190px;top:762px;width:1009px;height:1px;background:#e2e2e2;"></div>
<svg style="left:307px;top:752px" width="4" height="7" viewBox="0 0 4 7"><path d="M3.4 0.4 L0.4 3.4 L3.4 6.4 Z" fill="#a9c1da"/></svg>
<svg style="left:1185px;top:752px" width="4" height="7" viewBox="0 0 4 7"><path d="M0.6 0.4 L3.6 3.4 L0.6 6.4 Z" fill="#a9c1da"/></svg>
<span class="t" style="top:769.94px;font-size:9.16px;color:#444;left:192.2px;transform:scaleX(0.786);">vergrößern:</span>
<div class="r" style="left:234.7px;top:766.3px;width:230.5px;height:12.7px;background:#f8f8f8;"></div>
<svg style="left:237.2px;top:766.7px" width="12" height="14" viewBox="0 0 12 14"><ellipse cx="6" cy="7" rx="4.6" ry="5.5" fill="#fff" stroke="#c4c4c4" stroke-width="0.9"/></svg>
<svg style="left:273.5px;top:766.7px" width="12" height="14" viewBox="0 0 12 14"><ellipse cx="6" cy="7" rx="4.6" ry="5.5" fill="#fff" stroke="#c4c4c4" stroke-width="0.9"/></svg>
<svg style="left:318px;top:766.7px" width="12" height="14" viewBox="0 0 12 14"><ellipse cx="6" cy="7" rx="4.6" ry="5.5" fill="#fff" stroke="#c4c4c4" stroke-width="0.9"/></svg>
<svg style="left:386.3px;top:766.7px" width="12" height="14" viewBox="0 0 12 14"><ellipse cx="6" cy="7" rx="4.6" ry="5.5" fill="#fff" stroke="#c4c4c4" stroke-width="0.9"/><ellipse cx="6" cy="7" rx="3.1" ry="3.7" fill="#3e6f9e"/></svg>
<svg style="left:420.3px;top:766.7px" width="12" height="14" viewBox="0 0 12 14"><ellipse cx="6" cy="7" rx="4.6" ry="5.5" fill="#fff" stroke="#c4c4c4" stroke-width="0.9"/></svg>
<span class="t" style="top:769.84px;font-size:9.16px;color:#333;left:252.6px;transform:scaleX(0.716);">Jahre</span>
<span class="t" style="top:769.84px;font-size:9.16px;color:#333;left:288.6px;transform:scaleX(0.818);">Monate</span>
<span class="t" style="top:769.84px;font-size:9.16px;color:#333;left:333.3px;transform:scaleX(0.771);">Kalenderwoche</span>
<span class="t" style="top:769.84px;font-size:9.16px;color:#333;left:402px;transform:scaleX(0.715);">Tage</span>
<span class="t" style="top:769.84px;font-size:9.16px;color:#333;left:436px;transform:scaleX(0.788);">Stunden</span>
<div class="r" style="left:468px;top:766.8px;width:312.5px;height:12.2px;background:#c4def8;"></div>
<div class="r" style="left:468px;top:772.6px;width:312.5px;height:0.8px;background:#b4cfea;"></div>
<div class="r" style="left:502.3px;top:769px;width:7.7px;height:7.7px;background:#f2f2f2;box-sizing:border-box;border:1px solid #9c9c9c;border-radius:1px;"></div>
<span class="t" style="top:769.84px;font-size:9.16px;color:#444;left:786.7px;transform:scaleX(0.804);">Faktor[%]</span>
<span class="t" style="top:769.99px;font-size:8.87px;color:#333;left:825.6px;transform:scaleX(0.77);">74</span>
<svg style="left:6px;top:789px" width="10" height="11" viewBox="0 0 10 11"><path d="M2.8 2.6 A3.8 3.8 0 1 0 7.2 2.6" fill="none" stroke="#3cb83c" stroke-width="1.2"/><path d="M5 0.8 V5.2" stroke="#3cb83c" stroke-width="1.2"/></svg>
<svg style="left:32px;top:788.6px" width="9" height="12" viewBox="0 0 9 12"><path d="M4.5 0.6 Q5.3 0.6 5.3 1.6 Q7.4 2.4 7.4 5.4 V7.6 L8.4 9 H0.6 L1.6 7.6 V5.4 Q1.6 2.4 3.7 1.6 Q3.7 0.6 4.5 0.6 Z" fill="#e6e6e6"/><rect x="3.6" y="9.4" width="1.8" height="2" fill="#e6e6e6"/></svg>
</div></body></html>
